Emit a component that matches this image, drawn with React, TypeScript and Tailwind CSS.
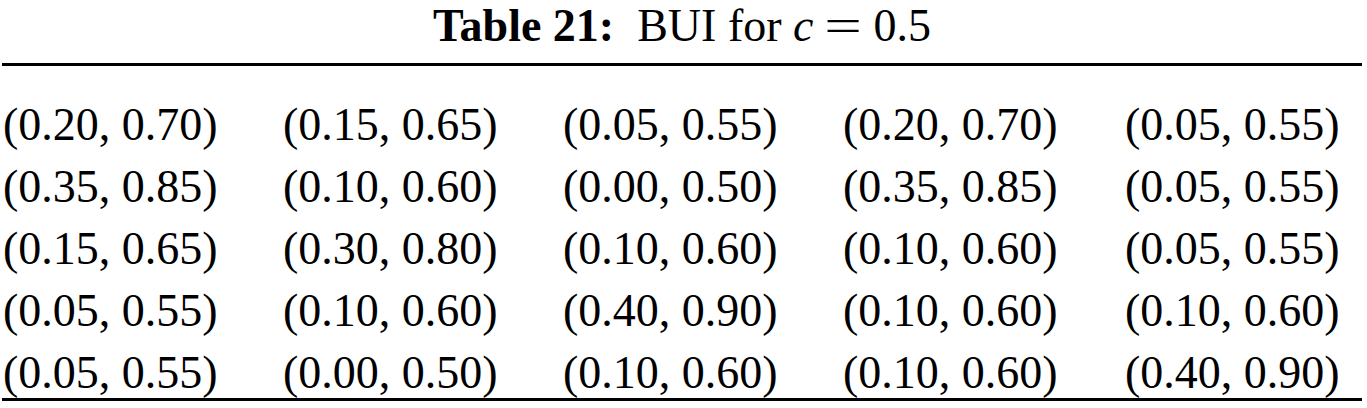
import React from 'react';

const rows: string[][] = [
  ['(0.20, 0.70)', '(0.15, 0.65)', '(0.05, 0.55)', '(0.20, 0.70)', '(0.05, 0.55)'],
  ['(0.35, 0.85)', '(0.10, 0.60)', '(0.00, 0.50)', '(0.35, 0.85)', '(0.05, 0.55)'],
  ['(0.15, 0.65)', '(0.30, 0.80)', '(0.10, 0.60)', '(0.10, 0.60)', '(0.05, 0.55)'],
  ['(0.05, 0.55)', '(0.10, 0.60)', '(0.40, 0.90)', '(0.10, 0.60)', '(0.10, 0.60)'],
  ['(0.05, 0.55)', '(0.00, 0.50)', '(0.10, 0.60)', '(0.10, 0.60)', '(0.40, 0.90)'],
];

export default function App() {
  return (
    <div className="w-[1367px] h-[408px] bg-white text-black overflow-hidden font-['Liberation_Serif','Times_New_Roman',serif]">
      <div className="ml-[2px] w-[1360px]">
        {/* Caption */}
        <div className="pt-[2.5px] text-center text-[46px] leading-[46px] whitespace-pre">
          <span className="font-bold">Table 21:</span>
          <span>{'  '}BUI for </span>
          <span className="italic">c</span>
          <span className="inline-block mx-[17px] scale-x-[1.45]">=</span>
          <span>0.5</span>
        </div>

        {/* Top rule */}
        <div className="mt-[14.5px] h-[3px] bg-black" />

        {/* Body */}
        <div className="pt-[35.5px] flex flex-col gap-[16px] text-[46px] leading-[46px]">
          {rows.map((row, i) => (
            <div key={i} className="grid grid-cols-[280px_280px_280px_282px_1fr] pl-[1px] whitespace-nowrap">
              {row.map((cell, j) => (
                <span key={j}>{cell}</span>
              ))}
            </div>
          ))}
        </div>

        {/* Bottom rule */}
        <div className="mt-[2px] h-[3px] bg-black" />
      </div>
    </div>
  );
}
